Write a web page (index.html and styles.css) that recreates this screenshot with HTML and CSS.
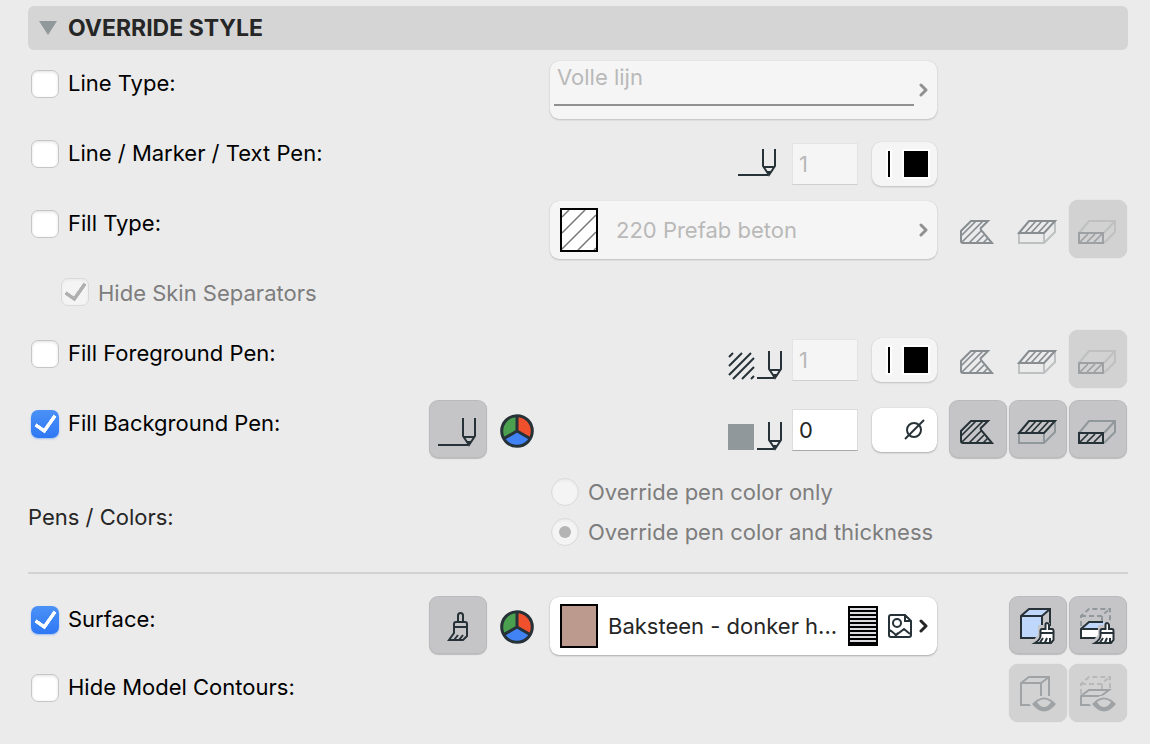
FILE: index.html
```html
<!DOCTYPE html>
<html lang="en">
<head>
    <meta charset="UTF-8">
    <meta name="viewport" content="width=device-width, initial-scale=1.0">
    <title>Override Style</title>
    <link rel="stylesheet" href="styles.css">
</head>
<body>
    <!-- Shared icons -->
    <svg class="sprite" aria-hidden="true">
        <symbol id="cut-fill" viewBox="0 0 58 58">
            <path class="dark" d="M14 43H43L32 30Q31 28 33 27L39 21H22L12 31V41Q12 43 14 43Z"/>
            <path class="dark hatch" d="M12 36L27 21M13 42L34 21M20 43L32 31M27 43L35 35M34 43L39 38"/>
        </symbol>
        <symbol id="cover-fill" viewBox="0 0 58 58">
            <path class="light" d="M10 33V43H35L46 32V21M35 33V43"/>
            <path class="dark" d="M10 33L20 21H46L35 33Z"/>
            <path class="dark hatch" d="M16 33L27 21M22 33L33 21M29 33L40 21"/>
        </symbol>
        <symbol id="section-fill" viewBox="0 0 58 58">
            <path class="light" d="M10 33L20 21H46V32L35 43M35 33L46 21"/>
            <path class="dark" d="M10 33H34V43H10Z"/>
            <path class="dark hatch" d="M11 42L19 34M18 42L26 34M25 42L33 34"/>
        </symbol>
        <symbol id="pen" viewBox="0 0 58 58">
            <path class="dark" d="M9 45H39M34 18V36L40 45L46 36V18M34 37H46M38 42H42L40 45Z"/>
        </symbol>
        <symbol id="wheel" viewBox="0 0 34 34">
            <path fill="#4aa04e" d="M17 17V2A15 15 0 0 0 4 24.500Z"/>
            <path fill="#f0502c" d="M17 17V2A15 15 0 0 1 30 24.500Z"/>
            <path fill="#4183f5" d="M17 17L4 24.500A15 15 0 0 0 30 24.500Z"/>
            <path fill="none" stroke="#263238" stroke-width="3" d="M17 2V17L4 24.500M17 17L30 24.500"/>
            <circle cx="17" cy="17" r="15.300" fill="none" stroke="#263238" stroke-width="3"/>
        </symbol>
        <symbol id="brush" viewBox="0 0 58 58">
            <path class="dark" d="M29 26V19.500Q29 17 31.500 17T34 19.500V26M25 31V28Q25 26 27 26H36Q38 26 38 28V40L34 44H20L25 37V31H38M25 44L29 39M30 44L34 39"/>
        </symbol>
        <symbol id="small-brush" viewBox="0 0 58 58">
            <path fill="none" stroke="#c5c5c7" stroke-width="6" d="M38 27V32H32V40L27 46H41L44 42V33H39"/>
            <path fill="#fff" stroke="#263238" stroke-width="2" d="M36.500 33V29Q36.500 27 38 27T40 29V33H43Q44.500 33 44.500 35V44L42 47H26Q31 44 31.500 40V35Q31.500 33 33 33ZM31 37H45"/>
            <path fill="none" stroke="#263238" stroke-width="2" d="M31 46.500L34 42M36 46.500L38 42M41 46.500V42"/>
        </symbol>
        <symbol id="eye" viewBox="0 0 58 58">
            <path fill="#d2d2d2" stroke="#d2d2d2" stroke-width="4" d="M23 40Q35 27 47 40Q35 54 23 40Z"/>
            <path fill="#a0a3a5" d="M23 40Q35 27 47 40Q35 55 23 40Z"/>
            <path fill="#d2d2d2" d="M28 38Q35 32.500 42 38Q39 43 35 43T28 38Z"/>
        </symbol>
        <symbol id="arrow" viewBox="0 0 10 16">
            <path fill="none" stroke="currentColor" stroke-width="3" stroke-linecap="round" stroke-linejoin="round" d="M2 3L7 8L2 13"/>
        </symbol>
    </svg>

    <main class="panel">
        <header class="panel-header">
            <svg class="triangle" viewBox="0 0 18 14" aria-hidden="true"><path d="M0 0H18L9 14Z"/></svg>
            <h1>OVERRIDE STYLE</h1>
        </header>

        <section class="rows">
            <div class="row">
                <label class="check"><input type="checkbox">Line Type:</label>
                <div class="control popup popup-line disabled">
                    <select aria-label="Line type" disabled><option>Volle lijn</option></select>
                    <span class="line-sample"></span>
                    <svg class="arrow"><use href="#arrow"/></svg>
                </div>
            </div>

            <div class="row">
                <label class="check"><input type="checkbox">Line / Marker / Text Pen:</label>
                <div class="control pen-control pen-control-low">
                    <svg class="pen-icon" viewBox="8 19 45 30"><use href="#pen" width="58" height="58"/></svg>
                    <input class="number" type="text" value="1" aria-label="Line pen" disabled>
                    <button class="chip disabled" type="button" aria-label="Line pen color" disabled><span class="bar"></span><span class="square"></span></button>
                </div>
            </div>

            <div class="row">
                <label class="check"><input type="checkbox">Fill Type:</label>
                <div class="control popup disabled">
                    <svg class="swatch" viewBox="0 0 34 40">
                        <path fill="none" stroke="#777" stroke-width="1.500" d="M0 7L7 0M0 23L23 0M0 39L34 5M16 40L34 22M32 40L34 38"/>
                    </svg>
                    <select class="indent" aria-label="Fill type" disabled><option>220 Prefab beton</option></select>
                    <svg class="arrow"><use href="#arrow"/></svg>
                </div>
                <div class="tools dim">
                    <button class="tool flat" type="button" aria-label="Cut fill" disabled><svg><use href="#cut-fill"/></svg></button>
                    <button class="tool flat" type="button" aria-label="Cover fill" disabled><svg><use href="#cover-fill"/></svg></button>
                    <button class="tool" type="button" aria-label="Section fill" disabled><svg><use href="#section-fill"/></svg></button>
                </div>
            </div>

            <div class="row row-sub">
                <label class="check check-sub"><input type="checkbox" checked disabled>Hide Skin Separators</label>
            </div>

            <div class="row">
                <label class="check"><input type="checkbox">Fill Foreground Pen:</label>
                <div class="control pen-control">
                    <svg class="fill-pen-icon" viewBox="0 1 55 42">
                        <path class="dark" d="M2 19L6 15M2 28L15 15M2 37L24 15M6 41L27 20M15 41L27 29M24 41L27 38"/>
                        <path class="dark" d="M30 40H47M42 13V31L48 40L54 31V13M42 32H54M46 37H50L48 40Z"/>
                    </svg>
                    <input class="number" type="text" value="1" aria-label="Foreground pen" disabled>
                    <button class="chip disabled" type="button" aria-label="Foreground pen color" disabled><span class="bar"></span><span class="square"></span></button>
                </div>
                <div class="tools dim">
                    <button class="tool flat" type="button" aria-label="Cut fill" disabled><svg><use href="#cut-fill"/></svg></button>
                    <button class="tool flat" type="button" aria-label="Cover fill" disabled><svg><use href="#cover-fill"/></svg></button>
                    <button class="tool" type="button" aria-label="Section fill" disabled><svg><use href="#section-fill"/></svg></button>
                </div>
            </div>

            <div class="row">
                <label class="check"><input type="checkbox" checked>Fill Background Pen:</label>
                <div class="mode">
                    <button class="tool" type="button" aria-label="Use pen"><svg><use href="#pen"/></svg></button>
                    <button class="wheel" type="button" aria-label="Use color"><svg><use href="#wheel"/></svg></button>
                </div>
                <div class="control pen-control">
                    <svg class="fill-pen-icon" viewBox="0 0 55 42">
                        <rect x="1" y="15" width="26" height="26" fill="#91989b"/>
                        <path class="dark" d="M30 40H47M42 13V31L48 40L54 31V13M42 32H54M46 37H50L48 40Z"/>
                    </svg>
                    <input class="number" type="text" value="0" aria-label="Background pen">
                    <button class="chip" type="button" aria-label="Background pen color">
                        <svg viewBox="0 0 65 44"><circle class="dark" cx="42" cy="22" r="7"/><path class="dark" d="M33 31L52 12"/></svg>
                    </button>
                </div>
                <div class="tools">
                    <button class="tool" type="button" aria-label="Cut fill"><svg><use href="#cut-fill"/></svg></button>
                    <button class="tool" type="button" aria-label="Cover fill"><svg><use href="#cover-fill"/></svg></button>
                    <button class="tool" type="button" aria-label="Section fill"><svg><use href="#section-fill"/></svg></button>
                </div>
            </div>

            <div class="row row-radios">
                <span class="caption" id="pens-colors">Pens / Colors:</span>
                <div class="control radios" role="radiogroup" aria-labelledby="pens-colors">
                    <label><input type="radio" name="pens" disabled>Override pen color only</label>
                    <label><input type="radio" name="pens" checked disabled>Override pen color and thickness</label>
                </div>
            </div>
        </section>

        <section class="rows rows-model">
            <div class="row">
                <label class="check"><input type="checkbox" checked>Surface:</label>
                <div class="mode">
                    <button class="tool" type="button" aria-label="Use surface"><svg><use href="#brush"/></svg></button>
                    <button class="wheel" type="button" aria-label="Use color"><svg><use href="#wheel"/></svg></button>
                </div>
                <div class="control popup">
                    <span class="swatch brick"></span>
                    <select aria-label="Surface"><option>Baksteen - donker h...</option></select>
                    <span class="texture"></span>
                    <svg class="image-icon" viewBox="0 0 24 24">
                        <path class="dark" d="M17 1H3Q1 1 1 3V21Q1 23 3 23H21Q23 23 23 21V7ZM17 1V7H23M2 16L8 21L10 19M7 22L16 15L22 20"/>
                        <circle class="dark" cx="9" cy="9" r="4"/>
                    </svg>
                    <svg class="arrow"><use href="#arrow"/></svg>
                </div>
                <div class="tools">
                    <button class="tool" type="button" aria-label="Uncut surfaces">
                        <svg viewBox="0 0 58 58">
                            <path class="sky" d="M12 20L20 13H41L33 20V42H12Z"/>
                            <path class="dark" d="M33 42H12V20L20 13H41V31M12 20H33L41 13M33 20V32"/>
                            <use href="#small-brush"/>
                        </svg>
                    </button>
                    <button class="tool" type="button" aria-label="Cut surfaces">
                        <svg viewBox="0 0 58 58">
                            <path class="light" stroke-dasharray="5 3" d="M12 30V20L20 13H41V25M12 20H32L41 13M33 20V27"/>
                            <path fill="#fff" d="M12 33H33V42H12Z"/>
                            <path class="sky" d="M12 33L20 26H38L32 33Z"/>
                            <path class="dark" d="M34 26H20L12 33V42H33M12 33H32"/>
                            <use href="#small-brush"/>
                        </svg>
                    </button>
                </div>
            </div>

            <div class="row">
                <label class="check"><input type="checkbox">Hide Model Contours:</label>
                <div class="tools muted">
                    <button class="tool" type="button" aria-label="Uncut contours" disabled>
                        <svg viewBox="0 0 58 58">
                            <path class="dark" d="M22 41H12V19L20 13H40V32M12 19H32L40 13M32 19V32"/>
                            <use href="#eye"/>
                        </svg>
                    </button>
                    <button class="tool" type="button" aria-label="Cut contours" disabled>
                        <svg viewBox="0 0 58 58">
                            <path class="light" stroke-dasharray="5 3" d="M12 30V20L20 13H41V25M12 20H32L41 13M33 20V27"/>
                            <path class="dark" d="M22 41H12V32L20 26H40L32 32H12M32 32V36"/>
                            <use href="#eye"/>
                        </svg>
                    </button>
                </div>
            </div>
        </section>
    </main>
</body>
</html>
```
FILE: styles.css
```css
* {
    box-sizing: border-box;
}

body {
    margin: 0;
    padding: 6px 22px 0 28px;
    background-color: #ebebeb;
    color: #000;
    font-family: Inter, "Liberation Sans", sans-serif;
    font-size: 22px;
    line-height: 28px;
}

button,
select,
input {
    margin: 0;
    padding: 0;
    border: none;
    background: none;
    color: inherit;
    font: inherit;
}

select,
input {
    appearance: none;
}

select:disabled,
input:disabled {
    opacity: 1;
}

svg {
    display: block;
}

.sprite {
    display: none;
}

.dark {
    fill: none;
    stroke: #263238;
    stroke-width: 2;
}

.light {
    fill: none;
    stroke: #91989b;
    stroke-width: 2;
}

.hatch {
    stroke-width: 1.7;
}

.sky {
    fill: #bfd7fb;
}

/* header bar */
.panel-header {
    display: flex;
    align-items: center;
    gap: 11px;
    height: 44px;
    padding-left: 11px;
    border-radius: 6px;
    background-color: #d5d5d5;
}

.panel-header h1 {
    margin: 0;
    color: #262626;
    font-size: 23px;
    font-weight: 700;
}

.triangle {
    width: 18px;
    height: 14px;
    fill: #91989b;
}

/* rows */
.rows {
    display: flex;
    flex-direction: column;
    gap: 10px;
    padding: 10px 0 18px;
}

.rows-model {
    gap: 8px;
    padding-top: 22px;
    border-top: 2px solid #d2d2d2;
}

.row {
    display: grid;
    grid-template-columns: 1fr 109px 387px 179px;
    column-gap: 12px;
    align-items: start;
    min-height: 60px;
}

.row-sub {
    min-height: 50px;
}

.check {
    grid-column: 1;
    grid-row: 1;
    display: flex;
    align-items: flex-start;
    gap: 9px;
    padding: 10px 0 0 3px;
    line-height: 26px;
    white-space: nowrap;
}

.check-sub {
    padding: 8px 0 0 33px;
    color: #7d7d7d;
    line-height: 30px;
}

input[type="checkbox"],
input[type="radio"] {
    flex: none;
    display: grid;
    place-items: center;
    width: 28px;
    height: 28px;
    border: 1px solid #c6c6c6;
    border-radius: 7px;
    background-color: #fff;
    box-shadow: inset 0 1px 3px rgba(0, 0, 0, 0.12);
}

input[type="checkbox"]:checked::before {
    content: "";
    width: 17px;
    height: 9px;
    margin-bottom: 6px;
    border: solid #fff;
    border-width: 0 0 4px 4px;
    border-radius: 1px;
    transform: rotate(-55deg);
}

input[type="checkbox"]:checked {
    border: none;
    background: linear-gradient(#4b91f7, #2f78f5);
    box-shadow: 0 1px 2px rgba(47, 120, 245, 0.4);
}

input[type="checkbox"]:disabled,
input[type="radio"]:disabled {
    border: 1px solid #dadada;
    background: #f4f4f4;
    box-shadow: inset 0 1px 3px rgba(0, 0, 0, 0.05);
}

input[type="checkbox"]:disabled::before {
    border-color: #b0b0b0;
}

input[type="radio"] {
    border-radius: 50%;
}

input[type="radio"]:checked::before {
    content: "";
    width: 12px;
    height: 12px;
    border-radius: 50%;
    background-color: #b4b4b4;
}

.mode {
    grid-column: 2;
    grid-row: 1;
    display: flex;
    align-items: flex-start;
    gap: 13px;
}

.wheel {
    margin-top: 14px;
}

.wheel,
.wheel svg {
    width: 34px;
    height: 34px;
}

.control {
    grid-column: 3;
    grid-row: 1;
}

/* popup selectors */
.popup {
    display: flex;
    align-items: center;
    height: 58px;
    margin-top: 1px;
    padding: 0 8px 0 10px;
    border-radius: 9px;
    background-color: #fff;
    box-shadow: 0 1px 2px rgba(0, 0, 0, 0.25), 0 0 1px rgba(0, 0, 0, 0.2);
    color: #262626;
}

.popup select {
    flex: 1;
    min-width: 0;
    margin-left: 10px;
    height: 32px;
}

.popup .indent {
    margin-left: 18px;
}

.popup.disabled,
.chip.disabled {
    background-color: #f5f5f5;
    box-shadow: 0 1px 2px rgba(0, 0, 0, 0.18), 0 0 1px rgba(0, 0, 0, 0.15);
}

.popup.disabled {
    color: #b9b9b9;
}

.popup-line {
    display: grid;
    grid-template-columns: 1fr 10px;
    grid-template-rows: 32px 2px;
    align-content: start;
    column-gap: 5px;
    row-gap: 11px;
    padding-left: 4px;
}

.popup-line select {
    grid-column: 1;
    grid-row: 1;
    margin-left: 3px;
}

.line-sample {
    grid-column: 1;
    grid-row: 2;
    height: 2px;
    background-color: #919191;
}

.arrow {
    flex: none;
    width: 10px;
    height: 16px;
}

.disabled .arrow {
    color: #919191;
}

.popup-line .arrow {
    grid-column: 2;
    grid-row: 1 / 3;
    align-self: end;
    margin-bottom: 8px;
}

.swatch {
    flex: none;
    width: 38px;
    height: 44px;
    border: 2px solid #000;
    background-color: #fff;
}

.brick {
    background-color: #bc9b8e;
}

.texture {
    width: 30px;
    height: 40px;
    border: 2px solid #000;
    background: repeating-linear-gradient(#dcdce0 0 2px, #000 2px 4px);
}

.image-icon {
    width: 24px;
    height: 24px;
    margin: 0 7px 0 10px;
}

/* pen fields */
.pen-control {
    display: flex;
    align-items: center;
    justify-content: flex-end;
    height: 60px;
}

.pen-control-low {
    align-self: end;
    height: 52px;
}

.pen-icon,
.fill-pen-icon {
    width: 45px;
    height: 30px;
    margin-right: 10px;
}

.fill-pen-icon {
    width: 55px;
    height: 42px;
}

.number {
    width: 66px;
    height: 42px;
    margin-right: 14px;
    padding-left: 6px;
    border: 1px solid #dcdcdc;
    border-bottom-color: #a8a8a8;
    background-color: #fff;
    color: #262626;
}

.number:disabled {
    border-color: #e4e4e4;
    border-bottom-color: #cfcfcf;
    background-color: #f5f5f5;
    color: #b9b9b9;
}

.chip {
    display: flex;
    align-items: center;
    gap: 10px;
    width: 65px;
    height: 44px;
    border-radius: 9px;
    background-color: #fff;
    box-shadow: 0 1px 2px rgba(0, 0, 0, 0.25), 0 0 1px rgba(0, 0, 0, 0.2);
}

.bar,
.square {
    width: 6px;
    height: 30px;
    border: 2px solid #fff;
    background-color: #000;
}

.bar {
    margin-left: 14px;
}

.square {
    width: 28px;
}

/* icon buttons */
.tools {
    grid-column: 4;
    grid-row: 1;
    display: flex;
    justify-content: flex-end;
    gap: 2px;
    padding-right: 1px;
}

.tool {
    flex: none;
    width: 58px;
    height: 58px;
    border-radius: 9px;
    background-color: #c5c5c7;
    box-shadow: inset 0 0 0 1px rgba(0, 0, 0, 0.05), 0 1px 1px rgba(0, 0, 0, 0.2);
}

.tool svg {
    width: 58px;
    height: 58px;
}

.tool:disabled {
    background-color: #d2d2d2;
    box-shadow: 0 0 1px rgba(0, 0, 0, 0.2);
}

.tool.flat {
    background: none;
    box-shadow: none;
}

.dim svg {
    opacity: 0.3;
}

.dim .flat svg {
    opacity: 0.5;
}

.muted .dark {
    stroke: #a0a3a5;
}

.muted .light {
    stroke: #b6b8b9;
}

/* radio buttons */
.row-radios {
    min-height: 84px;
}

.caption {
    padding-top: 33px;
    color: #262626;
}

.radios {
    display: flex;
    flex-direction: column;
    gap: 12px;
    padding: 8px 0 0 1px;
}

.radios label {
    display: flex;
    align-items: center;
    gap: 9px;
    color: #7d7d7d;
    white-space: nowrap;
}
```
